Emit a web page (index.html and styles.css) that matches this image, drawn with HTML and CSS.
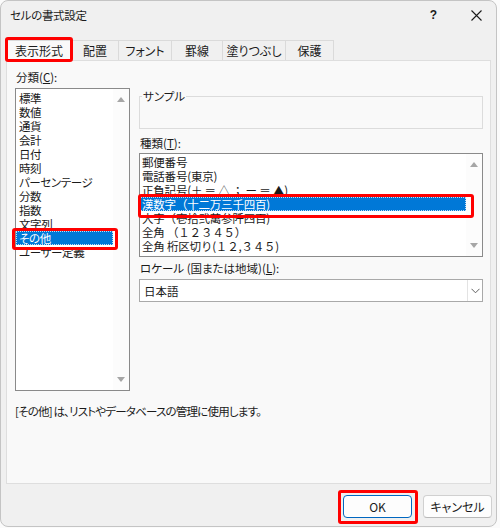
FILE: index.html
```html
<!DOCTYPE html>
<html lang="ja">
<head>
<meta charset="utf-8">
<title>セルの書式設定</title>
<link rel="stylesheet" href="styles.css">
</head>
<body>
<div class="window">
  <div class="titlebar">
    <span class="title">セルの書式設定</span>
    <span class="tb-help">?</span>
    <span class="tb-close"><svg width="11" height="11" viewBox="0 0 11 11"><path d="M0.5 0.5L10.5 10.5M10.5 0.5L0.5 10.5" stroke="#1a1a1a" stroke-width="1.1" fill="none"/></svg></span>
  </div>
  <div class="tabs">
    <div class="tab tab-active w66">表示形式</div>
    <div class="tab w47">配置</div>
    <div class="tab w53">フォント</div>
    <div class="tab w51">罫線</div>
    <div class="tab w63">塗りつぶし</div>
    <div class="tab w48">保護</div>
  </div>
  <div class="panel">
    <div class="cols">
      <div class="col-left">
        <div class="label">分類(<u>C</u>):</div>
        <div class="listbox cat-list">
          <div class="items">
            <div class="item">標準</div>
            <div class="item">数値</div>
            <div class="item">通貨</div>
            <div class="item">会計</div>
            <div class="item">日付</div>
            <div class="item">時刻</div>
            <div class="item">パーセンテージ</div>
            <div class="item">分数</div>
            <div class="item">指数</div>
            <div class="item">文字列</div>
            <div class="item selected">その他</div>
            <div class="item">ユーザー定義</div>
          </div>
          <div class="scrollbar">
            <span class="arrow-up"></span>
            <span class="arrow-down"></span>
          </div>
        </div>
      </div>
      <div class="col-right">
        <div class="sample">
          <span class="sample-legend">サンプル</span>
        </div>
        <div class="label label-type">種類(<u>T</u>):</div>
        <div class="listbox type-list">
          <div class="items">
            <div class="item">郵便番号</div>
            <div class="item">電話番号(東京)</div>
            <div class="item">正負記号(＋ ＝ △ ； ー ＝ ▲)</div>
            <div class="item selected">漢数字（十二万三千四百)</div>
            <div class="item">大字（壱拾弐萬参阡四百)</div>
            <div class="item">全角 （１２３４５）</div>
            <div class="item">全角 桁区切り(１２,３４５)</div>
          </div>
          <div class="scrollbar">
            <span class="arrow-up"></span>
            <span class="arrow-down"></span>
          </div>
        </div>
        <div class="label label-locale">ロケール (国または地域)(<u>L</u>):</div>
        <div class="combo">
          <span class="combo-text">日本語</span>
          <span class="combo-btn"><svg width="9" height="6" viewBox="0 0 9 6"><path d="M0.5 0.8L4.5 4.8L8.5 0.8" stroke="#606060" stroke-width="1" fill="none"/></svg></span>
        </div>
      </div>
    </div>
    <div class="desc">[その他] は、リストやデータベースの管理に使用します。</div>
  </div>
  <div class="footer">
    <button class="btn btn-default">OK</button>
    <button class="btn">キャンセル</button>
  </div>

  <div class="mark mark-tab"></div>
  <div class="mark mark-cat"></div>
  <div class="mark mark-type"></div>
  <div class="mark mark-ok"></div>
</div>
</body>
</html>
```
FILE: styles.css
```css
* { box-sizing: border-box; }
html, body { margin: 0; padding: 0; }
body {
  width: 500px;
  height: 528px;
  overflow: hidden;
  background: #fbfbfb;
  font-family: "Noto Sans CJK JP", "Noto Sans", sans-serif;
  font-size: 11.5px;
  color: #1b1b1b;
  font-feature-settings: "palt";
}
u { text-decoration: underline; text-underline-offset: 1px; }

.window {
  position: relative;
  width: 497px;
  height: 527px;
  background: #f0f0f0;
  border: 1px solid #c4c4c4;
  border-radius: 8px;
}

.titlebar {
  height: 28px;
  display: flex;
  align-items: center;
  padding-left: 9px;
}
.title { font-size: 11.5px; line-height: 14px; letter-spacing: -0.3px; }
.tb-help {
  margin-left: auto;
  margin-right: 34px;
  font-family: "Liberation Sans", sans-serif;
  font-weight: bold;
  font-size: 12px;
  line-height: 12px;
}
.tb-close {
  display: flex;
  margin-right: 14px;
}

.tabs {
  display: flex;
  margin: 11px 0 0 5px;
  height: 20px;
}
.tab {
  height: 20px;
  display: flex;
  align-items: center;
  justify-content: center;
  border: 1px solid #dadada;
  border-bottom: none;
  border-left: none;
  background: #f0f0f0;
  font-size: 12px;
  line-height: 14px;
}
.tab:first-child { border-left: 1px solid #dadada; }
.tab-active { background: #f9f9f9; height: 21px; margin-bottom: -1px; position: relative; }
.w66 { width: 66px; }
.w47 { width: 47px; }
.w53 { width: 53px; }
.w51 { width: 51px; }
.w63 { width: 63px; }
.w48 { width: 48px; }

.panel {
  margin-left: 5px;
  width: 485px;
  height: 424px;
  background: #f9f9f9;
  border: 1px solid #dedede;
  padding: 9px 0 0 8px;
}

.cols { display: flex; gap: 9px; }
.col-left { width: 115px; display: flex; flex-direction: column; }
.col-right { width: 344px; display: flex; flex-direction: column; }

.label { line-height: 14px; height: 14px; padding-left: 1px; }
.col-left .label { margin-bottom: 4px; }

.listbox {
  display: flex;
  background: #fff;
  border: 1px solid #8a8a8a;
}
.items { flex: 1; }
.item {
  height: 14px;
  line-height: 14px;
  white-space: nowrap;
  overflow: hidden;
}
.cat-list { height: 303px; }
.cat-list .items { padding-top: 2px; }
.cat-list .item { padding-left: 3px; letter-spacing: -0.4px; }
.type-list { height: 104px; }
.type-list .items { padding-top: 1px; }
.type-list .item { padding-left: 2px; font-feature-settings: normal; letter-spacing: -0.2px; }
.item.selected {
  background: #0078d7;
  color: #fff;
  outline: 1px dotted rgba(255, 255, 255, 0.75);
  outline-offset: -1px;
}

.scrollbar {
  width: 16px;
  background: #fcfcfc;
  display: flex;
  flex-direction: column;
  justify-content: space-between;
  align-items: center;
  padding: 8px 0;
}
.arrow-up, .arrow-down {
  width: 0;
  height: 0;
  border-left: 4px solid transparent;
  border-right: 4px solid transparent;
}
.arrow-up { border-bottom: 5px solid #a6a6a6; }
.arrow-down { border-top: 5px solid #a6a6a6; }

.sample {
  position: relative;
  margin-top: 26px;
  height: 33px;
  border: 1px solid #dcdcdc;
}
.sample-legend {
  position: absolute;
  top: -8px;
  left: 2px;
  padding: 0 1px;
  background: #f9f9f9;
  line-height: 14px;
}

.label-type { margin-top: 7px; margin-bottom: 3px; }
.label-locale { margin-top: 4px; margin-bottom: 4px; }

.combo {
  height: 23px;
  display: flex;
  align-items: center;
  background: #fff;
  border: 1px solid #a9a9a9;
}
.combo-text { flex: 1; padding-left: 4px; line-height: 14px; }
.combo-btn {
  width: 15px;
  height: 100%;
  border-left: 1px solid #e3e3e3;
  display: flex;
  align-items: center;
  justify-content: center;
}

.desc { margin-top: 13px; line-height: 14px; letter-spacing: -0.8px; }

.footer {
  display: flex;
  justify-content: flex-end;
  gap: 11px;
  margin: 11px 4px 0 0;
}
.btn {
  width: 69px;
  height: 23px;
  font-family: inherit;
  font-size: 12px;
  font-feature-settings: "palt";
  color: #1b1b1b;
  background: #fdfdfd;
  border: 1px solid #d0d0d0;
  border-bottom-color: #b8b8b8;
  border-radius: 4px;
  padding: 0;
}
.btn-default {
  border: 1px solid #0067c0;
  box-shadow: inset 0 0 0 1px #ffffff;
}

.mark {
  position: absolute;
  border: 3px solid #ff0000;
  border-radius: 3px;
}
.mark-tab { left: 4px; top: 36px; width: 68px; height: 25px; }
.mark-cat { left: 11px; top: 227px; width: 106px; height: 22px; }
.mark-type { left: 137px; top: 193px; width: 336px; height: 24px; }
.mark-ok { left: 337px; top: 489px; width: 80px; height: 34px; }
```
